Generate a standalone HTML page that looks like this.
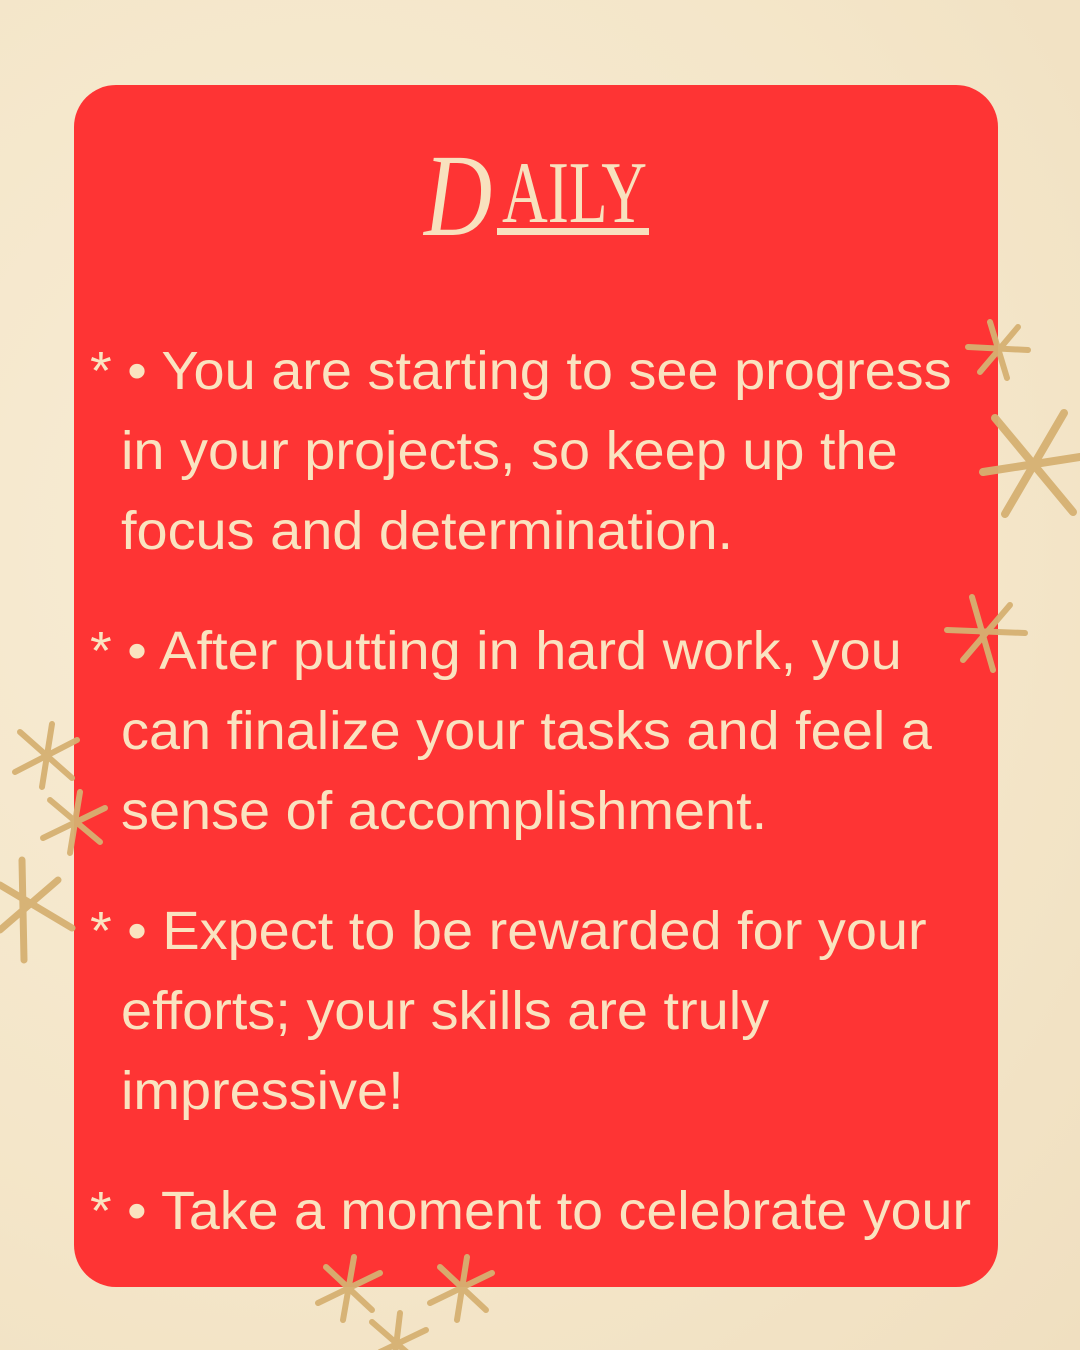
<!DOCTYPE html>
<html><head><meta charset="utf-8"><style>
html,body{margin:0;padding:0}
body{width:1080px;height:1350px;background:#f5e7ca;position:relative;overflow:hidden;font-family:"Liberation Sans",sans-serif}
.bg{position:absolute;inset:0;background:radial-gradient(ellipse at 30% 40%,#f8ecd5 0%,#f4e6c9 60%,#f0dfc0 100%)}
.card{position:absolute;left:74px;top:85px;width:924px;height:1202px;background:#fe3434;border-radius:42px;overflow:hidden}
.l{position:absolute;white-space:nowrap;font-size:54px;line-height:80px;color:#fae3c0;transform-origin:0 0;transform:scaleX(1.035)}
.t{position:absolute;color:#f8e1be;font-family:"Liberation Serif",serif;white-space:nowrap}
svg{position:absolute;left:0;top:0}
</style></head><body>
<div class="bg"></div>
<div class="card">
<div class="t" style="left:350px;top:52px;font-size:118px;line-height:118px;font-style:italic;transform:scaleX(.8);transform-origin:0 0">D</div>
<div class="t" style="left:428px;top:65px;font-size:88px;line-height:88px;transform:scaleX(.72);transform-origin:0 0">AILY</div>
<div style="position:absolute;left:423px;top:143px;width:152px;height:7px;background:#f8e1be"></div>
<div class="l" style="left:16px;top:246px">* • You are starting to see progress</div>
<div class="l" style="left:47px;top:326px">in your projects, so keep up the</div>
<div class="l" style="left:47px;top:406px">focus and determination.</div>
<div class="l" style="left:16px;top:526px">* • After putting in hard work, you</div>
<div class="l" style="left:47px;top:606px">can finalize your tasks and feel a</div>
<div class="l" style="left:47px;top:686px">sense of accomplishment.</div>
<div class="l" style="left:16px;top:806px">* • Expect to be rewarded for your</div>
<div class="l" style="left:47px;top:886px">efforts; your skills are truly</div>
<div class="l" style="left:47px;top:966px">impressive!</div>
<div class="l" style="left:16px;top:1086px;transform:scaleX(1.03)">* • Take a moment to celebrate your</div>
</div>
<svg width="1080" height="1350" viewBox="0 0 1080 1350" fill="none" stroke="#d6b172" stroke-linecap="round" stroke-width="6" opacity=".95">
<g><line x1="990" y1="322" x2="1007" y2="378"/><line x1="968" y1="347" x2="1028" y2="350"/><line x1="1018" y1="327" x2="980" y2="372"/></g>
<g stroke-width="8"><line x1="995" y1="418" x2="1073" y2="512"/><line x1="983" y1="472" x2="1080" y2="457"/><line x1="1064" y1="413" x2="1005" y2="514"/></g>
<g><line x1="972" y1="597" x2="993" y2="670"/><line x1="947" y1="630" x2="1025" y2="633"/><line x1="1010" y1="605" x2="963" y2="660"/></g>
<g><line x1="52" y1="724" x2="42" y2="787"/><line x1="20" y1="732" x2="72" y2="778"/><line x1="15" y1="772" x2="77" y2="740"/></g>
<g><line x1="80" y1="792" x2="70" y2="853"/><line x1="50" y1="800" x2="100" y2="842"/><line x1="43" y1="838" x2="105" y2="808"/></g>
<g stroke-width="7"><line x1="22" y1="860" x2="24" y2="960"/><line x1="0" y1="885" x2="72" y2="928"/><line x1="0" y1="930" x2="58" y2="880"/></g>
<g><line x1="354" y1="1257" x2="343" y2="1320"/><line x1="326" y1="1267" x2="372" y2="1310"/><line x1="318" y1="1303" x2="380" y2="1273"/></g>
<g><line x1="467" y1="1257" x2="457" y2="1320"/><line x1="440" y1="1267" x2="486" y2="1310"/><line x1="430" y1="1303" x2="492" y2="1273"/></g>
<g><line x1="400" y1="1313" x2="395" y2="1355"/><line x1="372" y1="1322" x2="410" y2="1355"/><line x1="380" y1="1352" x2="426" y2="1330"/></g>
</svg>
</body></html>
